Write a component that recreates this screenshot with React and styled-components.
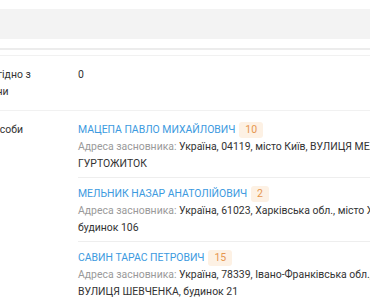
import React from "react";
import styled, { createGlobalStyle } from "styled-components";

const Global = createGlobalStyle`
  html, body { margin: 0; padding: 0; background: #fff; overflow: hidden; }
  body { font-family: Roboto, "Noto Sans", Arial, sans-serif; font-size: 10.45px; color: #333; }
`;

const Page = styled.div`
  padding-top: 9px;
  width: 370px;
  overflow: hidden;
`;

const TopBar = styled.div`
  height: 30px;
  background: #f3f3f3;
`;

const Rule = styled.div`
  margin-top: 9px;
  border-top: 2px solid #ececec;
`;

const Table = styled.div`
  margin-top: 5px;
  margin-left: -106px;
  width: 760px;
  border-top: 1px solid #f1f1f1;
`;

const Row = styled.div`
  display: grid;
  grid-template-columns: 184px 1fr;
  padding: ${(p) => p.$pad || "10px 0"};
  border-bottom: ${(p) => (p.$last ? "none" : "1px solid #f1f1f1")};
  line-height: 17px;
`;

const Label = styled.div`
  color: #333;
  white-space: nowrap;
`;

const Value = styled.div`
  color: #333;
`;

const Entry = styled.div`
  padding: ${(p) => (p.$first ? "0 0 5px" : "7px 0 5px")};
  border-bottom: ${(p) => (p.$last ? "none" : "1px solid #eeeeee")};
`;

const NameLine = styled.div`
  display: flex;
  align-items: center;
  gap: 4px;
  height: 17px;
`;

const Name = styled.a`
  color: #3c9ae0;
  text-decoration: none;
  white-space: nowrap;
`;

const Badge = styled.span`
  display: inline-block;
  background: #fdf1e4;
  color: #e6964f;
  font-size: 10.5px;
  line-height: 16px;
  padding: 0 6px;
  border-radius: 3px;
`;

const Address = styled.div`
  color: #333;
  white-space: nowrap;
`;

const Muted = styled.span`
  color: #9a9a9a;
`;

const founders = [
  {
    name: "МАЦЕПА ПАВЛО МИХАЙЛОВИЧ",
    count: 10,
    l1: "Україна, 04119, місто Київ, ВУЛИЦЯ МЕЛЬНИКОВА, будинок 36,",
    l2: "ГУРТОЖИТОК",
  },
  {
    name: "МЕЛЬНИК НАЗАР АНАТОЛІЙОВИЧ",
    count: 2,
    l1: "Україна, 61023, Харківська обл., місто Харків, ВУЛИЦЯ СУМСЬКА,",
    l2: "будинок 106",
  },
  {
    name: "САВИН ТАРАС ПЕТРОВИЧ",
    count: 15,
    l1: "Україна, 78339, Івано-Франківська обл., Коломийський район, село,",
    l2: "ВУЛИЦЯ ШЕВЧЕНКА, будинок 21",
  },
];

export default function App() {
  return (
    <>
      <Global />
      <Page>
        <TopBar />
        <Rule />
        <Table>
          <Row>
            <Label>
              Кількість учасників згідно з
              <br />
              законодавства України
            </Label>
            <Value>0</Value>
          </Row>
          <Row $pad="10px 0 0" $last>
            <Label>Засновники фізичні особи</Label>
            <Value>
              {founders.map((f, i) => (
                <Entry key={f.name} $first={i === 0} $last={i === founders.length - 1}>
                  <NameLine>
                    <Name href="#">{f.name}</Name>
                    <Badge>{f.count}</Badge>
                  </NameLine>
                  <Address>
                    <Muted>Адреса засновника: </Muted>
                    {f.l1}
                  </Address>
                  <Address>{f.l2}</Address>
                </Entry>
              ))}
            </Value>
          </Row>
        </Table>
      </Page>
    </>
  );
}
